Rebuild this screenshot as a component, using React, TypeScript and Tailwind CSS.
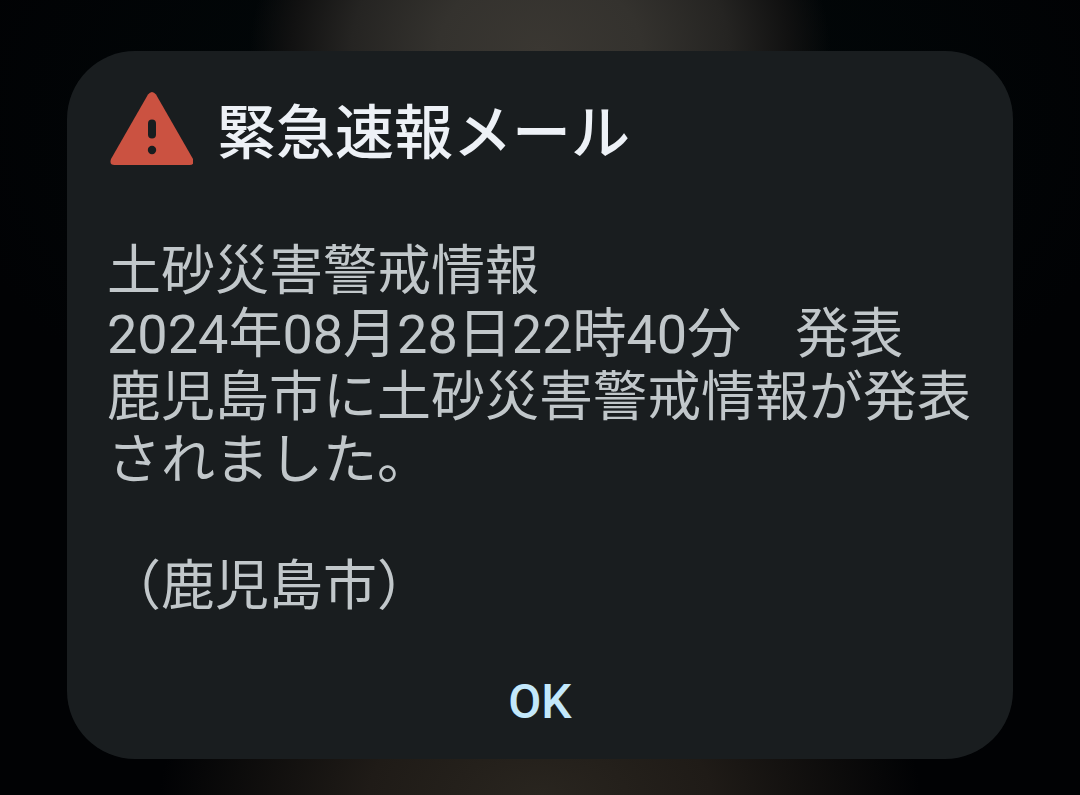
export default function App() {
  return (
    <main className="min-h-screen bg-[#010204] bg-[radial-gradient(ellipse_290px_220px_at_50%_50px,#3a3732_0,#34322e_35%,#252422_65%,#111111_86%,transparent_100%),radial-gradient(ellipse_380px_200px_at_50%_100%,#29251f,#1f1b17_45%,transparent),radial-gradient(ellipse_600px_380px_at_50%_15%,#020a0b,transparent)] px-[67px] pt-[51px] pb-9 font-[Roboto,'Noto_Sans_CJK_JP',sans-serif]">
      <section role="alertdialog" aria-labelledby="alert-title" aria-describedby="alert-body" className="flex flex-col rounded-[68px] bg-[#191d1f] px-10 pt-10 pb-[26px]">
        <header className="flex items-start gap-6">
          <svg aria-hidden="true" viewBox="0 0 86 76" className="h-[76px] w-[86px] shrink-0">
            <path d="M41 3.500Q45-1.500 49 3.500L86 68Q88 74 82.500 74H7.500Q2 74 4 68Z" fill="#cb5241" />
            <path d="M45 32.500V43.500" stroke="#191d1f" strokeWidth="8" strokeLinecap="round" />
            <circle cx="45" cy="59" r="4.200" fill="#191d1f" />
          </svg>
          <h1 id="alert-title" className="text-[59px] leading-[86px] font-medium text-[#edf1f6]">緊急速報メール</h1>
        </header>
        <p id="alert-body" className="mt-[63px] text-[54px] leading-[63px] whitespace-pre-line text-[#c1c7ca]">
          {"土砂災害警戒情報\n2024年08月28日22時40分　発表\n鹿児島市に土砂災害警戒情報が発表されました。\n\n（鹿児島市）"}
        </p>
        <button type="button" className="mt-[53px] self-center px-8 text-[48px] leading-[62px] font-medium text-[#c3e8fb]">OK</button>
      </section>
    </main>
  );
}
